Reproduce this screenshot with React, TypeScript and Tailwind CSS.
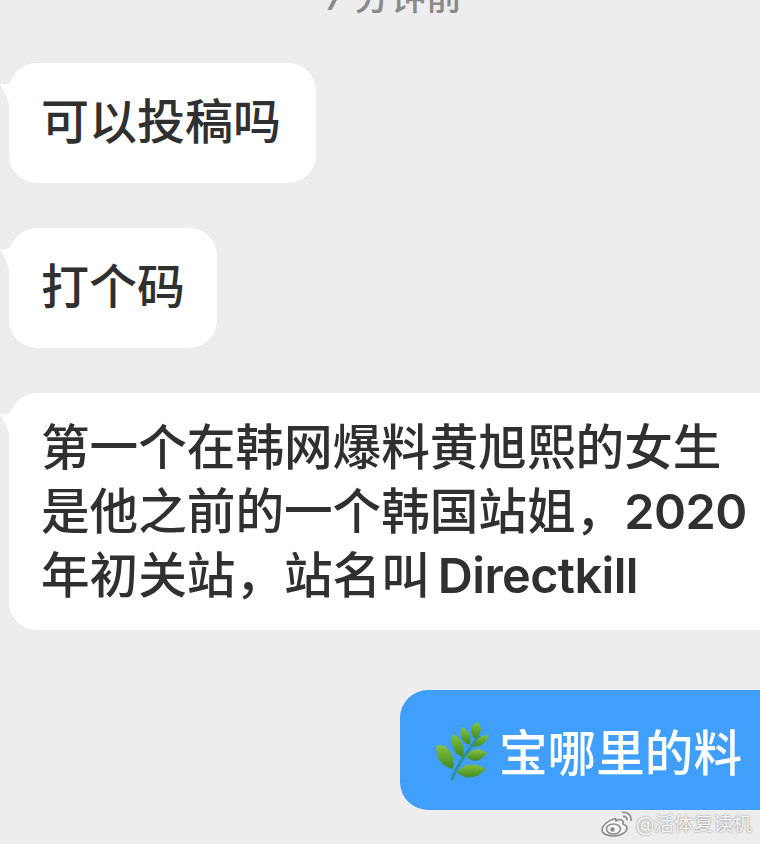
const cjk = "font-['Inter','Noto_Sans_CJK_SC','Noto_Sans_CJK_JP',sans-serif]";

function Tail() {
  return (
    <svg className="absolute left-[-9px] top-[16px]" width="24" height="40" viewBox="0 0 24 40">
      <path d="M0 5 C8 6 14 3 20 0 L24 36 L12 38 C10 26 6 14 0 5Z" fill="#ffffff" />
    </svg>
  );
}

function Bubble({ children, className }: { children: React.ReactNode; className: string }) {
  return (
    <div className={`relative bg-white rounded-[28px] text-[#303030] font-medium leading-[64px] ${className}`}>
      <Tail />
      {children}
    </div>
  );
}

function Leaf({ d, fill = "url(#leaf)" }: { d: string; fill?: string }) {
  return <path d={d} fill={fill} />;
}

function Sprig() {
  return (
    <svg width="56" height="62" viewBox="0 0 56 62" className="shrink-0 mt-[2px]">
      <defs>
        <linearGradient id="leaf" x1="0" y1="0" x2="0" y2="1">
          <stop offset="0" stopColor="#86c13c" />
          <stop offset="1" stopColor="#3f8a22" />
        </linearGradient>
      </defs>
      <path d="M17 60 C21 46 32 31 45 16" stroke="#2f8f9a" strokeWidth="3" fill="none" />
      <Leaf d="M2 25 C13 24 21 35 18 49 C7 47 -1 37 2 25Z" />
      <Leaf d="M18 14 C26 17 31 28 28 37 C19 35 14 24 18 14Z" />
      <Leaf d="M27 7 C34 10 37 18 35 25 C27 23 23 15 27 7Z" />
      <Leaf d="M42 2 C48 7 47 14 40 19 C34 13 35 6 42 2Z" />
      <Leaf d="M54 15 C52 23 45 27 38 27 C40 19 47 15 54 15Z" />
      <Leaf d="M31 36 C37 28 46 28 52 33 C47 41 37 44 31 36Z" />
      <Leaf d="M22 52 C29 43 41 42 51 49 C43 58 31 61 22 52Z" />
    </svg>
  );
}

function WeiboLogo() {
  return (
    <svg width="32" height="26" viewBox="0 0 32 26" fill="none">
      <path d="M13 8 C6 10 1 15 1 19 C1 23 7 25 13 25 C20 25 26 21 26 17 C26 14 23 14 22 13 C23 10 21 8 17 9 L15 10 C15 8 15 7 13 8Z" fill="#f7f7f7" stroke="#8b8b8b" strokeWidth="1.6" />
      <ellipse cx="12.5" cy="18" rx="7" ry="5" stroke="#8b8b8b" strokeWidth="1.6" />
      <circle cx="11.5" cy="18.5" r="2.2" fill="#8b8b8b" />
      <path d="M21 1.5 C26 0.5 31 4 30 10" stroke="#8b8b8b" strokeWidth="1.6" />
      <path d="M22 5.5 C24.5 5 26.5 7 26 9.5" stroke="#8b8b8b" strokeWidth="1.6" />
    </svg>
  );
}

export default function App() {
  return (
    <div className={`relative h-[844px] w-[760px] overflow-hidden bg-[#ededed] ${cjk} flex flex-col items-start`}>
      <div className="self-center mt-[-23px] h-[40px] pl-[26px] text-[36px] leading-[40px] text-[#8a8a8a] font-medium">
        7 分钟前
      </div>

      <Bubble className="ml-[9px] mt-[46px] h-[120px] w-[307px] pl-[32px] pt-[27px] text-[48px]">可以投稿吗</Bubble>
      <Bubble className="ml-[9px] mt-[45px] h-[120px] w-[208px] pl-[32px] pt-[27px] text-[48px]">打个码</Bubble>
      <Bubble className="ml-[9px] mt-[45px] h-[237px] w-[790px] pl-[32px] pt-[24px] whitespace-nowrap text-[48.6px]">
        <div className="mt-[-1px]">第一个在韩网爆料黄旭熙的女生</div>
        <div>是他之前的一个韩国站姐，<span className="font-semibold tracking-[-0.5px]">2020</span></div>
        <div>年初关站，站名叫<span className="ml-[8px] font-semibold tracking-[-0.6px]">Directkill</span></div>
      </Bubble>

      <div className="ml-[400px] mt-[60px] h-[120px] w-[390px] rounded-[28px] bg-[#409ffb] flex items-center pl-[35px] text-white text-[48.6px] font-medium">
        <Sprig />
        <span className="ml-[8px] pt-[8px]">宝哪里的料</span>
      </div>

      <div className="absolute right-[8px] bottom-[7px] flex items-center gap-[3px] text-[19.5px] leading-[26px] text-[#f4f4f4] [text-shadow:0_0_2px_#777]">
        <WeiboLogo />
        <span>@活体复读机</span>
      </div>
    </div>
  );
}
